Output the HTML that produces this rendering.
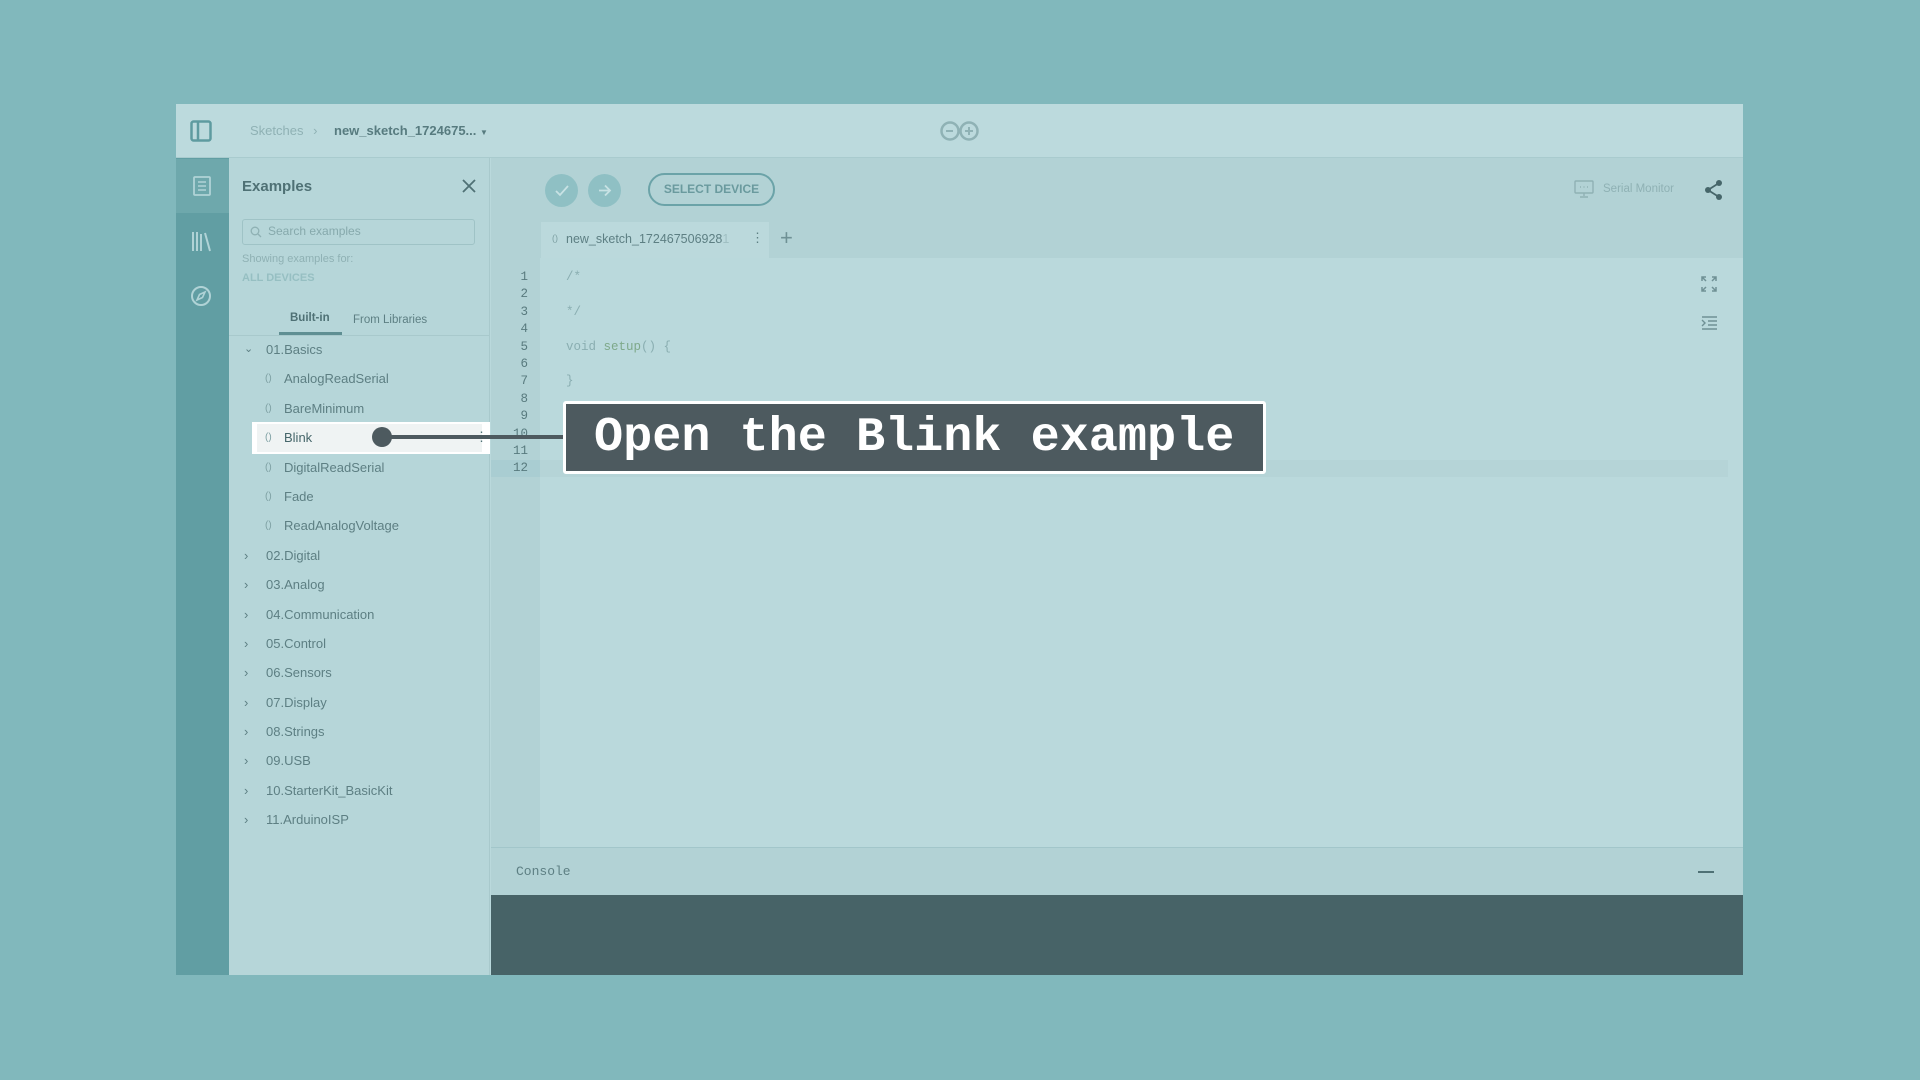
<!DOCTYPE html>
<html><head><meta charset="utf-8"><style>
*{margin:0;padding:0;box-sizing:border-box}
body{width:1920px;height:1080px;background:#81b8bc;position:relative;overflow:hidden;font-family:"Liberation Sans",sans-serif;color:#5d7f83}
.a{position:absolute}
.mono{font-family:"Liberation Mono",monospace}
.l div{height:29.4px;line-height:29.4px;white-space:nowrap}
.l span{display:inline-block;vertical-align:top}
</style></head><body>
<div class="a" style="left:176px;top:104px;width:1567px;height:871px;background:#bad9dc"></div>
<!-- top bar -->
<div class="a" style="left:176px;top:104px;width:1567px;height:54px;background:#bcdadd;border-bottom:1px solid #a9cbce"></div>
<svg class="a" style="left:190px;top:120px" width="22" height="22"><rect x="1.5" y="1.5" width="19" height="19" rx="2" fill="none" stroke="#5e9ba0" stroke-width="2.5"/><line x1="8" y1="2" x2="8" y2="20" stroke="#5e9ba0" stroke-width="2.5"/></svg>
<div class="a" style="left:250px;top:123px;font-size:13px;color:#8fb1b4">Sketches <span style="margin:0 6px">›</span></div>
<div class="a" style="left:334px;top:123px;font-size:13px;font-weight:bold;color:#577b7f">new_sketch_1724675... <span style="font-size:8px;font-weight:normal">▼</span></div>
<svg class="a" style="left:938px;top:120px" width="44" height="22"><circle cx="12" cy="11" r="8.5" fill="none" stroke="#8fb2b5" stroke-width="2.5"/><circle cx="31" cy="11" r="8.5" fill="none" stroke="#8fb2b5" stroke-width="2.5"/><line x1="8" y1="11" x2="15" y2="11" stroke="#8fb2b5" stroke-width="2"/><line x1="27" y1="11" x2="35" y2="11" stroke="#8fb2b5" stroke-width="2"/><line x1="31" y1="7" x2="31" y2="15" stroke="#8fb2b5" stroke-width="2"/></svg>
<!-- rail -->
<div class="a" style="left:176px;top:158px;width:53px;height:817px;background:#619ea3"></div>
<div class="a" style="left:176px;top:159px;width:53px;height:54px;background:#6ea8ac"></div>
<svg class="a" style="left:192px;top:176px" width="20" height="20"><rect x="2" y="1" width="16" height="18" rx="1" fill="none" stroke="#b0d3d6" stroke-width="1.8"/><path d="M6 6h8M6 10h8M6 14h8" stroke="#b0d3d6" stroke-width="1.6"/></svg>
<svg class="a" style="left:190px;top:230px" width="24" height="22"><path d="M3 2v19M7 2v19M11 4v17M15 3l5 18" stroke="#b0d3d6" stroke-width="2" fill="none"/></svg>
<svg class="a" style="left:190px;top:285px" width="22" height="22"><circle cx="11" cy="11" r="9" fill="none" stroke="#b0d3d6" stroke-width="2"/><path d="M15 7l-2.5 5.5L7 15l2.5-5.5z" fill="none" stroke="#b0d3d6" stroke-width="1.6"/></svg>
<!-- examples panel -->
<div class="a" style="left:229px;top:158px;width:261px;height:817px;background:#b6d6d9;border-right:1px solid #a8c9cc"></div>
<div class="a" style="left:242px;top:178px;font-size:15px;font-weight:bold;color:#4f7175">Examples</div>
<svg class="a" style="left:461px;top:178px" width="16" height="16"><path d="M2 2l12 12M14 2L2 14" stroke="#4f7175" stroke-width="1.8"/></svg>
<div class="a" style="left:242px;top:219px;width:233px;height:26px;border:1px solid #9fc3c6;border-radius:3px"></div>
<svg class="a" style="left:250px;top:226px" width="12" height="12"><circle cx="5" cy="5" r="3.8" fill="none" stroke="#8fb1b4" stroke-width="1.3"/><path d="M8 8l3 3" stroke="#8fb1b4" stroke-width="1.3"/></svg>
<div class="a" style="left:268px;top:224px;font-size:12px;color:#86a9ac">Search examples</div>
<div class="a" style="left:242px;top:253px;font-size:11px;color:#8fb1b4">Showing examples for:</div>
<div class="a" style="left:242px;top:272px;font-size:11px;font-weight:bold;color:#96bfc2">ALL DEVICES</div>
<div class="a" style="left:290px;top:312px;font-size:11.5px;font-weight:bold;color:#4f7175">Built-in</div>
<div class="a" style="left:353px;top:314px;font-size:11.5px;color:#5d7f83">From Libraries</div>
<div class="a" style="left:229px;top:335px;width:261px;height:1px;background:#a8c9cc"></div>
<div class="a" style="left:279px;top:332px;width:63px;height:3px;background:#5f8f93"></div>
<div class="a" style="left:252px;top:422px;width:238px;height:32px;background:#fff"></div>
<div class="a" style="left:257px;top:424px;width:225px;height:28px;background:#eff3f3"></div>
<div class="a l" style="left:244px;top:335px;font-size:13px;color:#5d7f83">
<div><span style="width:22px;font-size:11px">⌄</span>01.Basics</div>
<div style="padding-left:21px"><span style="width:19px;font-size:10px;color:#7ea0a3">()</span>AnalogReadSerial</div>
<div style="padding-left:21px"><span style="width:19px;font-size:10px;color:#7ea0a3">()</span>BareMinimum</div>
<div style="padding-left:21px;color:#46666a"><span style="width:19px;font-size:10px;color:#7ea0a3">()</span>Blink</div>
<div style="padding-left:21px"><span style="width:19px;font-size:10px;color:#7ea0a3">()</span>DigitalReadSerial</div>
<div style="padding-left:21px"><span style="width:19px;font-size:10px;color:#7ea0a3">()</span>Fade</div>
<div style="padding-left:21px"><span style="width:19px;font-size:10px;color:#7ea0a3">()</span>ReadAnalogVoltage</div>
<div><span style="width:22px">›</span>02.Digital</div>
<div><span style="width:22px">›</span>03.Analog</div>
<div><span style="width:22px">›</span>04.Communication</div>
<div><span style="width:22px">›</span>05.Control</div>
<div><span style="width:22px">›</span>06.Sensors</div>
<div><span style="width:22px">›</span>07.Display</div>
<div><span style="width:22px">›</span>08.Strings</div>
<div><span style="width:22px">›</span>09.USB</div>
<div><span style="width:22px">›</span>10.StarterKit_BasicKit</div>
<div><span style="width:22px">›</span>11.ArduinoISP</div>
</div>
<div class="a" style="left:475px;top:429px;font-size:13px;color:#4f7175">⋮</div>
<!-- toolbar -->
<div class="a" style="left:491px;top:158px;width:1252px;height:100px;background:#b2d2d5"></div>
<div class="a" style="left:545px;top:174px;width:33px;height:33px;border-radius:50%;background:#8fc0c4"></div>
<svg class="a" style="left:553px;top:182px" width="17" height="17"><path d="M3 9l4 4 8-9" fill="none" stroke="#c8e2e4" stroke-width="1.8"/></svg>
<div class="a" style="left:588px;top:174px;width:33px;height:33px;border-radius:50%;background:#8fc0c4"></div>
<svg class="a" style="left:596px;top:182px" width="17" height="17"><path d="M3 8.5h11M9 3.5l5 5-5 5" fill="none" stroke="#c8e2e4" stroke-width="1.8"/></svg>
<div class="a" style="left:648px;top:173px;width:127px;height:33px;border:2px solid #6ba3a8;border-radius:17px;font-size:12px;font-weight:bold;color:#6a9a9e;text-align:center;line-height:29px">SELECT DEVICE</div>
<svg class="a" style="left:1574px;top:180px" width="20" height="18"><rect x="1" y="1" width="18" height="12" rx="1" fill="none" stroke="#8fb1b4" stroke-width="1.4"/><path d="M6 7h1M9.5 7h1M13 7h1M10 13v3M6 17h8" stroke="#8fb1b4" stroke-width="1.4"/></svg>
<div class="a" style="left:1603px;top:183px;font-size:11.5px;color:#8fb1b4">Serial Monitor</div>
<svg class="a" style="left:1704px;top:179px" width="20" height="22"><circle cx="15" cy="4" r="3" fill="#46666a"/><circle cx="15" cy="18" r="3" fill="#46666a"/><circle cx="4" cy="11" r="3" fill="#46666a"/><path d="M15 4L4 11l11 7" fill="none" stroke="#46666a" stroke-width="1.8"/></svg>
<!-- tab -->
<div class="a" style="left:541px;top:222px;width:228px;height:36px;background:#bbd9dc"></div>
<div class="a" style="left:552px;top:232px;font-size:12.5px;color:#5d7f83;white-space:nowrap;width:195px;overflow:hidden"><span style="font-size:9px;color:#7ea0a3;margin-right:8px;vertical-align:2px">()</span>new_sketch_172467506928<span style="color:#9fbfc2">1</span></div>
<div class="a" style="left:751px;top:230px;font-size:13px">⋮</div>
<div class="a" style="left:780px;top:225px;font-size:22px;color:#6f9195">+</div>
<!-- gutter + code -->
<div class="a" style="left:491px;top:258px;width:49px;height:589px;background:#b2d2d5"></div>
<div class="a" style="left:540px;top:460px;width:1188px;height:17px;background:#b5d4d7"></div>
<div class="a" style="left:491px;top:460px;width:49px;height:17px;background:#a9cdd2"></div>
<div class="a mono" style="left:491px;top:269px;width:37px;text-align:right;font-size:12.5px;line-height:17.4px;color:#587a7e">1<br>2<br>3<br>4<br>5<br>6<br>7<br>8<br>9<br>10<br>11<br>12</div>
<div class="a mono" style="left:566px;top:269px;font-size:12.5px;line-height:17.4px;color:#8aaeb1;white-space:pre">/*

*/

void <span style="color:#7ea98a">setup</span>() {

}</div>
<svg class="a" style="left:1700px;top:275px" width="18" height="18"><path d="M2 6V2h4M2 2l4 4M12 2h4v4M16 2l-4 4M2 12v4h4M2 16l4-4M16 12v4h-4M16 16l-4-4" fill="none" stroke="#6f9195" stroke-width="1.5"/></svg>
<svg class="a" style="left:1700px;top:314px" width="18" height="16"><path d="M2 3h15M8 7h9M8 11h9M2 15h15M2 6l3 3-3 3" fill="none" stroke="#6f9195" stroke-width="1.4"/></svg>
<!-- console -->
<div class="a" style="left:491px;top:847px;width:1252px;height:48px;background:#b2d2d5;border-top:1px solid #a2c6ca"></div>
<div class="a mono" style="left:516px;top:864px;font-size:13px;color:#5d7f83">Console</div>
<div class="a" style="left:1698px;top:871px;width:16px;height:2px;background:#4f7175"></div>
<div class="a" style="left:491px;top:895px;width:1252px;height:80px;background:#476367"></div>
<!-- callout -->
<div class="a" style="left:381px;top:435px;width:185px;height:4px;background:#4d5a5f"></div>
<div class="a" style="left:372px;top:427px;width:20px;height:20px;border-radius:50%;background:#4d5a5f"></div>
<div class="a mono" style="left:563px;top:401px;width:703px;height:73px;background:#4d5a5f;border:3px solid #fff;border-radius:3px;color:#fff;font-size:48.5px;font-weight:bold;line-height:67px;padding-left:28px;white-space:nowrap">Open the Blink example</div>
</body></html>
